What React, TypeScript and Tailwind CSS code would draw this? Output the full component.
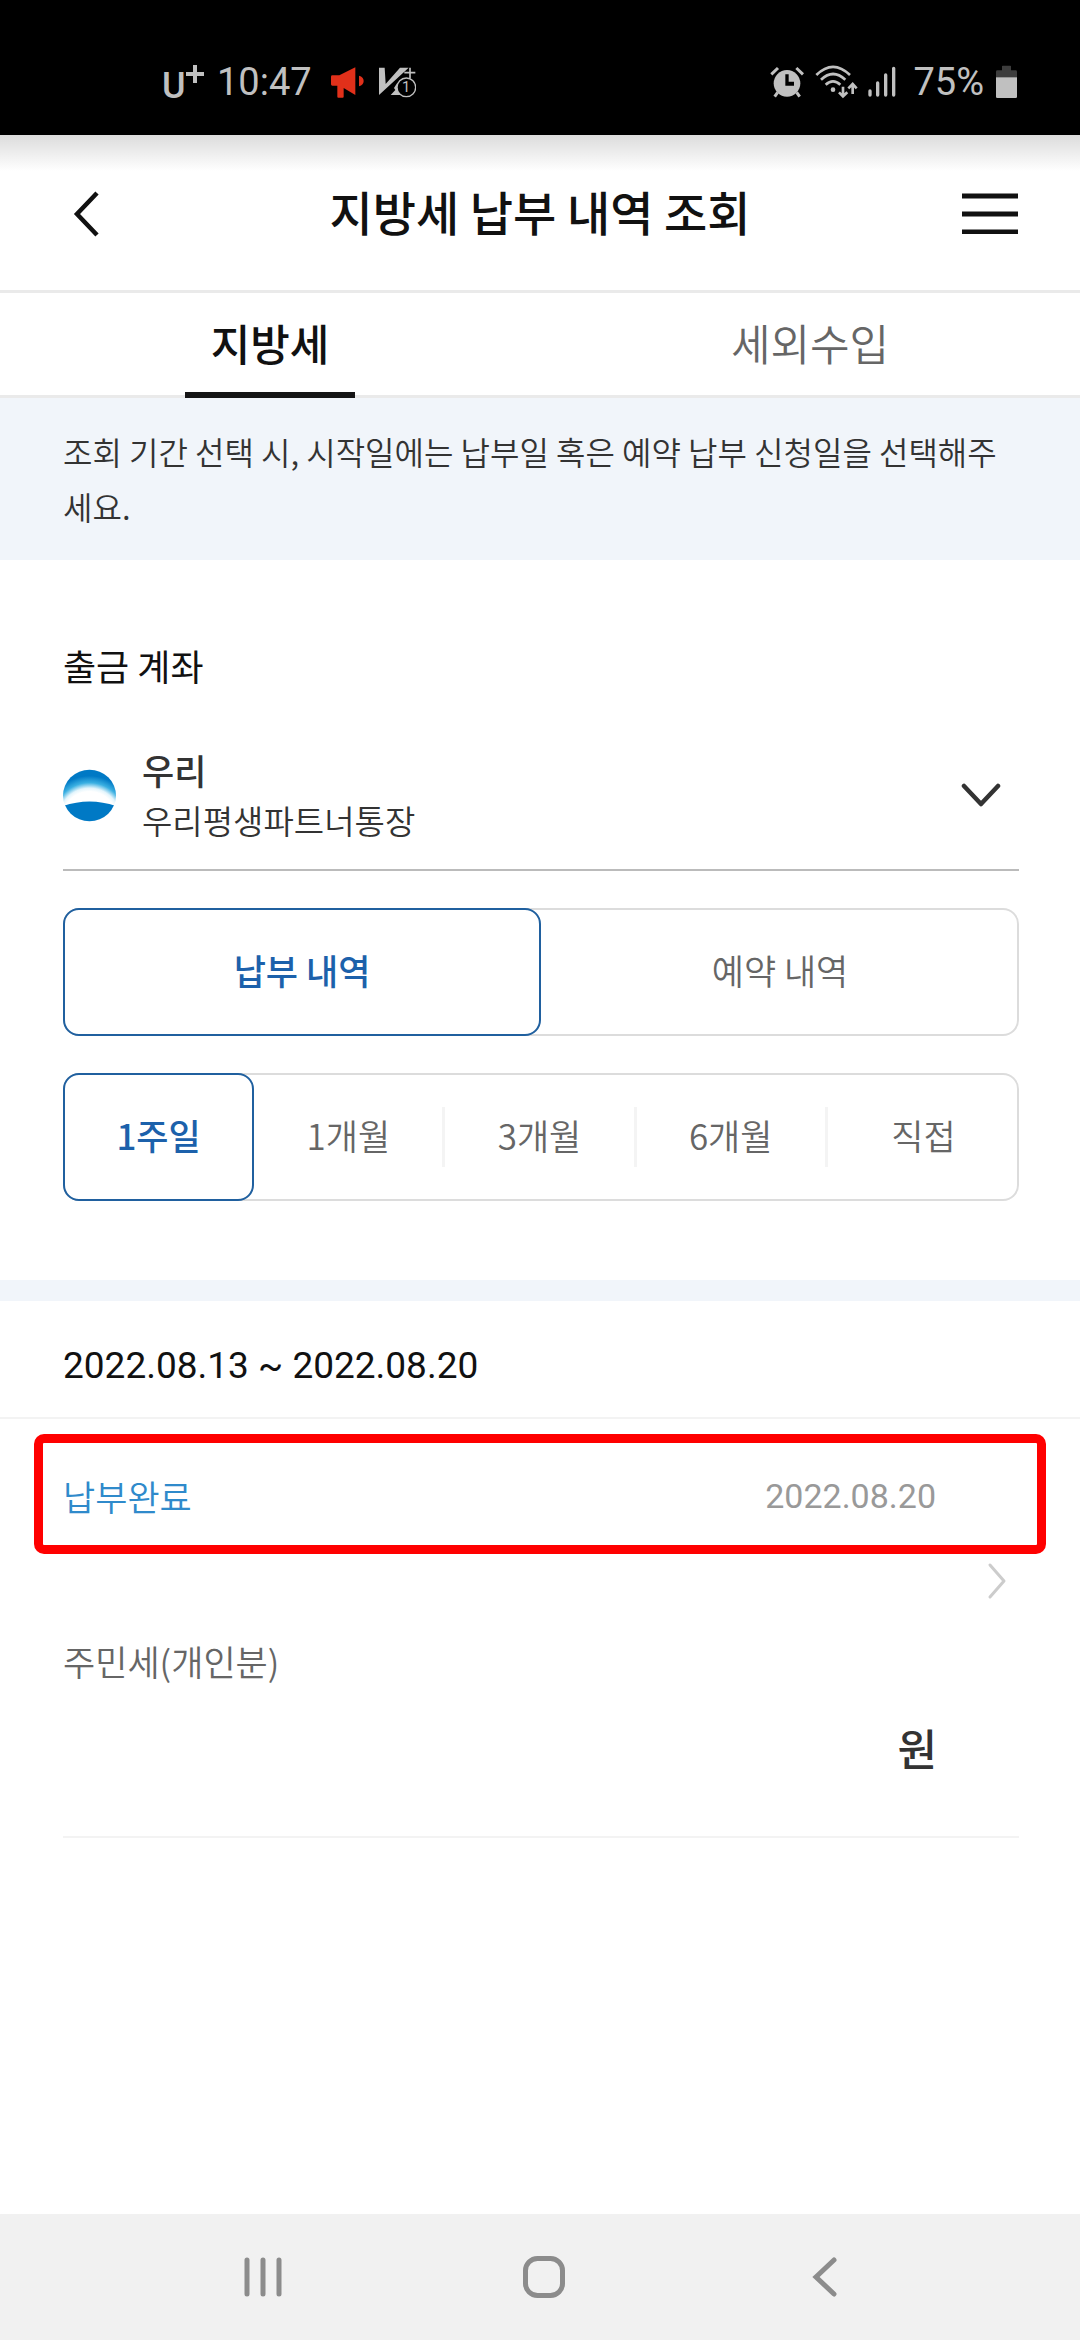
import { useState } from "react"
import clsx from "clsx"

const tabs = ["지방세", "세외수입"]
const historyTypes = ["납부 내역", "예약 내역"]
const periods = ["1주일", "1개월", "3개월", "6개월", "직접"]

function StatusBar() {
  return (
    <div className="flex h-[135px] items-center justify-between bg-black pt-[29px] pl-[162px] pr-[63px] font-[Roboto,sans-serif] text-[38px] font-normal leading-none text-[#c0c0c0]">
      <div className="flex items-center">
        {/* Carrier */}
        <div className="flex w-[55px] items-start">
          <span className="pt-[7px] text-[36px] font-medium">U</span>
          <svg className="mt-1 h-[18px] w-[18px]" viewBox="0 0 18 18" aria-hidden="true">
            <path d="M9 0v18M0 9h18" stroke="currentColor" strokeWidth="4" />
          </svg>
        </div>
        <span className="w-[114px]">10:47</span>
        <svg className="h-[31px] w-[33px]" viewBox="575 79 99 93" aria-hidden="true">
          <path
            d="M579 104h21l48-24v83l-35-21v26q0 3-3 3h-13q-3 0-3-3v-33h-15q-4 0-4-4v-23q0-4 4-4zM659 105q14 4 14 16t-14 16z"
            fill="#e1301a"
          />
        </svg>
        <svg className="ml-[15px] h-[31px] w-[37px]" viewBox="717 82 111 93" aria-hidden="true">
          <path d="M717 84h17l3 49 43-49h26l-89 82z" fill="currentColor" />
          <path d="M752 166l14-15-4-6 10-16 8 8v29z" fill="currentColor" />
          <path d="M810 84v32M793 99h33" stroke="currentColor" strokeWidth="5" />
          <circle cx="799" cy="143" r="28" fill="#000" stroke="currentColor" strokeWidth="4" />
          <text x="798" y="158" textAnchor="middle" fontSize="44" fill="currentColor">
            1
          </text>
        </svg>
      </div>
      <div className="flex items-center">
        {/* Alarm */}
        <svg className="h-[32px] w-[34px]" viewBox="57 76 102 96" aria-hidden="true">
          <circle cx="108" cy="128" r="40" fill="currentColor" />
          <path
            d="M61 101l20-19M136 82l20 19M80 155l-9 13M137 155l9 13"
            stroke="currentColor"
            strokeWidth="9"
          />
          <path d="M103 101h10v22h16v12h-26z" fill="#000" />
        </svg>
        {/* Wifi */}
        <svg className="ml-[11px] h-[34px] w-[43px]" viewBox="193 71 129 102" aria-hidden="true">
          <g fill="none" stroke="currentColor" strokeWidth="8">
            <path d="M197 101q50-49 101 0M211 115q36-34 73 0M225 130q22-20 44 0" />
            <path d="M277 136v28M265 153l12 12 13-12M306 158v-29M293 141l13-13 12 13" />
          </g>
          <circle cx="247" cy="145" r="7" fill="currentColor" />
        </svg>
        {/* Signal */}
        <svg className="ml-[10px] h-[32px] w-[28px]" viewBox="353 77 84 96" aria-hidden="true">
          <path
            d="M359 152v12M382 128v36M406 104v60M430 84v80"
            stroke="currentColor"
            strokeWidth="10"
            strokeLinecap="round"
          />
        </svg>
        <span className="ml-[17px]">75%</span>
        <svg className="ml-[12px] h-[34px] w-[21px]" viewBox="738 71 63 102" aria-hidden="true">
          <path d="M756 75q0-2 2-2h23q2 0 2 2v12h14q4 0 4 4v17h-63V91q0-4 4-4h14z" fill="#3d3d3d" />
          <path d="M738 108h63v58q0 4-4 4h-55q-4 0-4-4z" fill="currentColor" />
        </svg>
      </div>
    </div>
  )
}

function Header() {
  return (
    <header className="flex h-[158px] items-center justify-between border-b-[3px] border-[#eaeaea] bg-linear-to-b from-[#dcdcdc] to-white to-[36px] px-[62px] text-[#111]">
      <button type="button" aria-label="뒤로" className="w-[56px] pl-[10px]">
        <svg className="h-[48px] w-[28px]" viewBox="0 0 28 48" fill="none">
          <path d="M25 4L5 25l20 21" stroke="currentColor" strokeWidth="4.5" />
        </svg>
      </button>
      <h1 className="pb-1 text-[47px] font-medium leading-[60px]">지방세 납부 내역 조회</h1>
      <button type="button" aria-label="메뉴">
        <svg className="h-[42px] w-[56px]" viewBox="0 0 56 42" fill="none">
          <path d="M0 4h56M0 22h56M0 40h56" stroke="currentColor" strokeWidth="5" />
        </svg>
      </button>
    </header>
  )
}

function BankLogo() {
  return (
    <svg className="h-[53px] w-[53px] shrink-0" viewBox="0 0 53 53" aria-hidden="true">
      <defs>
        <clipPath id="disc">
          <ellipse cx="26.5" cy="26.5" rx="26.5" ry="25.7" />
        </clipPath>
        <radialGradient id="sky" gradientUnits="userSpaceOnUse" cx="26.5" cy="50" r="49">
          <stop offset="0.56" stopColor="#fff" />
          <stop offset="0.63" stopColor="#e4f5fc" />
          <stop offset="0.74" stopColor="#3bb0e2" />
          <stop offset="0.88" stopColor="#0079c5" />
        </radialGradient>
      </defs>
      <g clipPath="url(#disc)">
        <rect width="53" height="53" fill="url(#sky)" />
        <path d="M0 37q26.5-9 53 0v16H0z" fill="#0079c5" />
      </g>
    </svg>
  )
}

interface SegmentsProps {
  label: string
  items: string[]
  value: string
  onChange: (item: string) => void
  divided?: boolean
}

function Segments({ label, items, value, onChange, divided }: SegmentsProps) {
  return (
    <div
      role="group"
      aria-label={label}
      className="grid h-[128px] auto-cols-fr grid-flow-col rounded-[16px] text-[35px] shadow-[inset_0_0_0_2px_#dcdcdc]"
    >
      {items.map((item, i) => (
        <button
          key={item}
          type="button"
          aria-pressed={item === value}
          onClick={() => onChange(item)}
          className={clsx(
            "flex items-center rounded-[16px]",
            item === value
              ? "border-2 border-[#20609f] bg-white font-medium text-[#1c61ab]"
              : "text-[#666]"
          )}
        >
          <span
            className={clsx(
              "flex-1 pb-1 leading-[56px]",
              divided && item !== value && i < items.length - 1 && "border-r-[3px] border-[#f4f4f4]"
            )}
          >
            {item}
          </span>
        </button>
      ))}
    </div>
  )
}

export default function App() {
  const [tab, setTab] = useState(tabs[0])
  const [type, setType] = useState(historyTypes[0])
  const [period, setPeriod] = useState(periods[0])

  return (
    <div className="flex min-h-screen flex-col bg-white font-['Noto_Sans_CJK_KR',sans-serif] font-[350] text-[#333]">
      <StatusBar />
      <Header />

      <div role="tablist" className="flex h-[105px] border-b-[3px] border-[#eaeaea] text-[43px]">
        {tabs.map((name) => (
          <button
            key={name}
            type="button"
            role="tab"
            aria-selected={name === tab}
            onClick={() => setTab(name)}
            className="flex h-[105px] flex-1 justify-center"
          >
            <span
              className={clsx(
                "h-[105px] px-[26px] leading-[98px]",
                name === tab
                  ? "border-b-[6px] border-[#151515] font-medium text-[#111]"
                  : "text-[#666]"
              )}
            >
              {name}
            </span>
          </button>
        ))}
      </div>

      <p className="bg-[#f1f5fa] py-[26px] pl-[63px] pr-[61px] text-[32px] leading-[55px]">
        조회 기간 선택 시, 시작일에는 납부일 혹은 예약 납부 신청일을 선택해주세요.
      </p>

      <main className="flex-1">
        <section className="pt-[80px] pr-[61px] pb-[79px] pl-[63px]">
          <h2 id="account" className="text-[36px] font-normal leading-[50px] text-[#111]">
            출금 계좌
          </h2>
          {/* Account picker */}
          <button
            type="button"
            aria-haspopup="listbox"
            aria-labelledby="account bank"
            className="mt-[55px] flex w-full items-center border-b-2 border-[#bbb] pb-[24px] text-left"
          >
            <BankLogo />
            <span id="bank" className="ml-[26px] flex-1">
              <span className="block text-[35px] font-medium leading-[50px]">우리</span>
              <span className="block text-[33px] leading-[50px]">우리평생파트너통장</span>
            </span>
            <svg className="mr-[18px] h-[24px] w-[40px]" viewBox="0 0 40 24" fill="none" aria-hidden="true">
              <path
                d="M3 3l17 18L37 3"
                stroke="#333"
                strokeWidth="4.5"
                strokeLinecap="round"
                strokeLinejoin="round"
              />
            </svg>
          </button>

          <div className="mt-[37px] space-y-[37px]">
            <Segments label="내역 구분" items={historyTypes} value={type} onChange={setType} />
            <Segments label="조회 기간" items={periods} value={period} onChange={setPeriod} divided />
          </div>
        </section>

        <section className="border-t-[21px] border-[#f1f5fa]">
          <p className="border-b-2 border-[#f3f3f3] px-[63px] pt-[14px] font-[Roboto,sans-serif] text-[37px] font-normal leading-[102px] text-[#111]">
            2022.08.13 ~ 2022.08.20
          </p>

          <article>
            <div className="mx-[34px] mt-[15px] flex h-[120px] items-center justify-between rounded-[10px] border-[9px] border-[#f00] pt-1 pl-[20px] pr-[101px]">
              <span className="text-[35px] leading-[50px] text-[#2f8acb]">납부완료</span>
              <time className="font-[Roboto,sans-serif] text-[34px] font-normal leading-[50px] text-[#999]">
                2022.08.20
              </time>
            </div>
            <div className="mr-[61px] ml-[63px] border-b-2 border-[#f3f3f3] pb-[59px]">
              <div className="flex justify-end pt-[8px] pr-[12px]">
                <button type="button" aria-label="상세 보기">
                  <svg className="h-[38px] w-[20px]" viewBox="0 0 20 38" fill="none">
                    <path
                      d="M3 3l14 16L3 35"
                      stroke="#ccc"
                      strokeWidth="3"
                      strokeLinecap="round"
                      strokeLinejoin="round"
                    />
                  </svg>
                </button>
              </div>
              <p className="mt-[36px] text-[35px] leading-[50px] text-[#666]">주민세(개인분)</p>
              <p className="mt-[31px] pr-[82px] text-right text-[43px] font-medium leading-[60px]">
                원
              </p>
            </div>
          </article>
        </section>
      </main>

      {/* System navigation */}
      <nav className="grid h-[126px] grid-cols-3 bg-[#f1f1f1] pl-[122px] pr-[115px] text-[#8c8c8c]">
        <button type="button" aria-label="최근 앱" className="flex items-center justify-center">
          <svg className="h-[42px] w-[42px]" viewBox="0 0 42 42" fill="none">
            <path
              d="M5 4v34M21 4v34M37 4v34"
              stroke="currentColor"
              strokeWidth="5"
              strokeLinecap="round"
            />
          </svg>
        </button>
        <button type="button" aria-label="홈" className="flex items-center justify-center">
          <svg className="h-[42px] w-[42px]" viewBox="0 0 42 42" fill="none">
            <rect x="2.5" y="2.5" width="37" height="37" rx="12" stroke="currentColor" strokeWidth="5" />
          </svg>
        </button>
        <button type="button" aria-label="이전" className="flex items-center justify-center">
          <svg className="h-[42px] w-[42px]" viewBox="0 0 42 42" fill="none">
            <path
              d="M30 4L12 21l18 17"
              stroke="currentColor"
              strokeWidth="5"
              strokeLinecap="round"
            />
          </svg>
        </button>
      </nav>
    </div>
  )
}
